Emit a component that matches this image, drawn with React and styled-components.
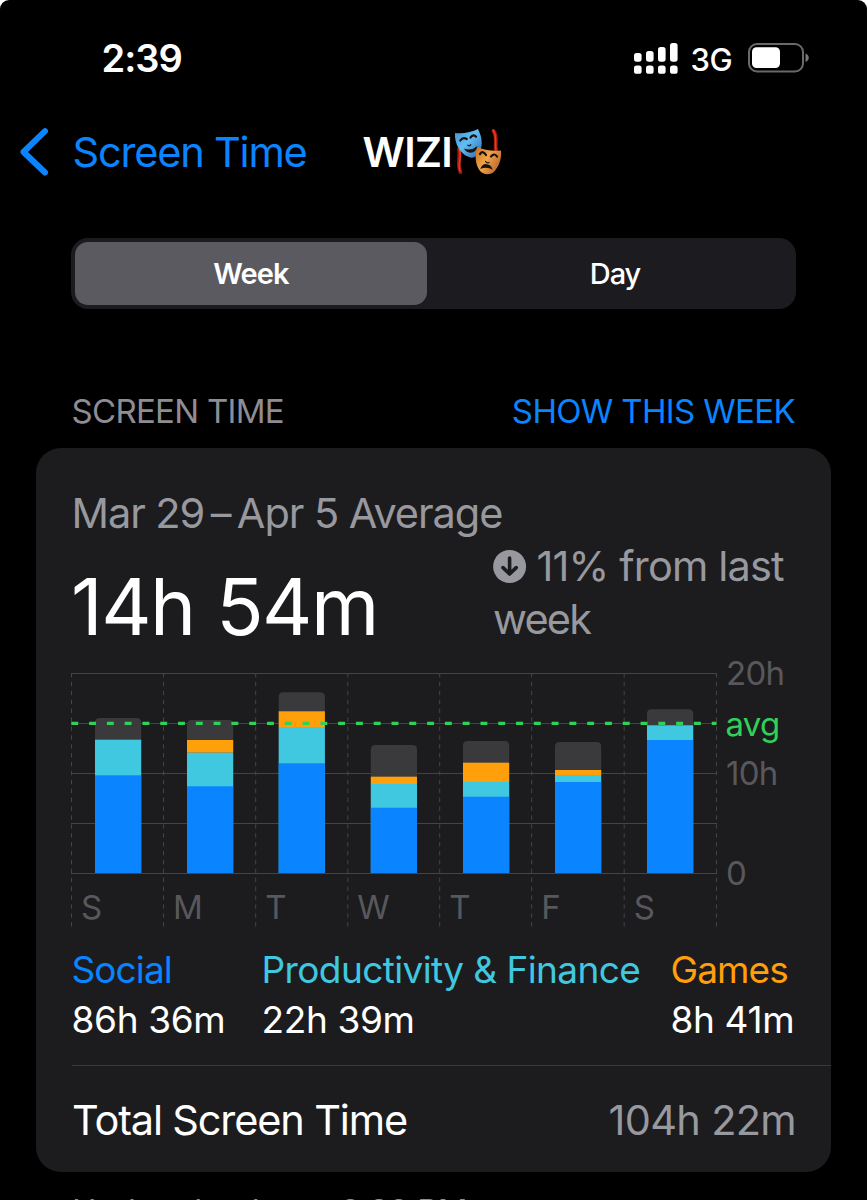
import React from "react";
import styled, { createGlobalStyle } from "styled-components";

const GlobalStyle = createGlobalStyle`
  * { box-sizing: border-box; }
  body { margin: 0; background: #fff; }
`;

const c = {
  blue: "#0a84ff",
  teal: "#40c8e0",
  orange: "#ff9f0a",
  green: "#30d158",
  gray: "#98989f",
  dim: "#58585c",
  rest: "#3a3a3c",
  card: "#1c1c1e",
};

const Screen = styled.main`
  width: 867px;
  height: 1200px;
  overflow: hidden;
  display: flex;
  flex-direction: column;
  background: #000;
  border-radius: 9px 9px 0 0;
  font-family: Inter, "Liberation Sans", sans-serif;
  color: #fff;
  white-space: nowrap;

  & > * {
    flex: none;
  }
`;

const StatusBar = styled.header`
  display: flex;
  align-items: center;
  justify-content: space-between;
  height: 116px;
  padding: 0 58px 0 101.5px;
`;

const Clock = styled.time`
  font-size: 38px;
  font-weight: 600;
  letter-spacing: -1px;
`;

const StatusIcons = styled.div`
  display: flex;
  align-items: center;
`;

const Network = styled.span`
  margin: 2px 16px 0 13px;
  font-size: 31px;
  font-weight: 500;
  letter-spacing: -0.6px;
`;

const NavBar = styled.nav`
  display: flex;
  align-items: center;
  height: 71px;
  padding-left: 19px;
`;

const BackLabel = styled.a`
  margin-left: 22.5px;
  width: 290px;
  font-size: 41.5px;
  line-height: 50px;
  letter-spacing: -1.2px;
  color: ${c.blue};
`;

const Title = styled.h1`
  margin: 0;
  display: flex;
  align-items: center;
  gap: 3px;
  font-size: 41.5px;
  line-height: 50px;
  font-weight: 600;
  letter-spacing: -0.7px;
`;

const Segmented = styled.div`
  display: grid;
  grid-template-columns: 352px 1fr;
  height: 71px;
  margin: 51px 71px 0;
  padding: 4px;
  border-radius: 17px;
  background: #1c1c20;
`;

const Segment = styled.button`
  border: 0;
  border-radius: 13px;
  padding: 0 0 0 ${(p) => (p.$on ? "0" : "11px")};
  font: ${(p) => (p.$on ? 600 : 500)} 29px/62px Inter, sans-serif;
  letter-spacing: ${(p) => (p.$on ? "-0.9px" : "-1.1px")};
  color: #fff;
  background: ${(p) => (p.$on ? "#5b5a60" : "transparent")};
`;

const SectionHeader = styled.div`
  display: flex;
  justify-content: space-between;
  height: 52px;
  margin: 76px 72px 11px 71.5px;
  font-size: 33px;
  line-height: 52px;
  letter-spacing: -0.7px;
  color: #8d8d93;
`;

const HeaderLink = styled.a`
  color: ${c.blue};
  letter-spacing: -0.65px;
`;

const Card = styled.section`
  height: 724px;
  margin: 0 36px;
  padding: 39px 0 0 36px;
  border-radius: 25px;
  background: ${c.card};
`;

const Range = styled.div`
  height: 53px;
  font-size: 41.5px;
  line-height: 53px;
  letter-spacing: -1.07px;
  text-indent: -0.5px;
  color: ${c.gray};
`;

const Summary = styled.div`
  display: flex;
  height: 107px;
`;

const Average = styled.div`
  width: 421px;
  margin-top: 16.5px;
  font-size: 78px;
  line-height: 100px;
  letter-spacing: -1.6px;
  word-spacing: 1.5px;
  text-indent: -1px;
`;

const Change = styled.div`
  font-size: 41.5px;
  line-height: 53px;
  letter-spacing: -0.85px;
  color: ${c.gray};
`;

const ChangeLine = styled.div`
  display: flex;
  align-items: center;
  gap: 9.5px;
`;

const ChangeTail = styled.div`
  letter-spacing: -1.8px;
`;

const Chart = styled.svg`
  display: block;
`;

const ChartLabel = styled.text`
  font-size: 33px;
  fill: ${(p) => p.$fill || c.dim};
  letter-spacing: -0.7px;
`;

const Legend = styled.div`
  display: grid;
  grid-template-columns: 190px 409px auto;
  height: 121px;
  border-bottom: 1px solid #39393c;
`;

const LegendItem = styled.div`
  font-size: 37px;
  line-height: 50px;
  text-indent: -0.5px;
`;

const LegendName = styled.div`
  color: ${(p) => p.$color};
  letter-spacing: ${(p) => p.$track};
`;

const LegendValue = styled.div`
  letter-spacing: -0.35px;
`;

const Total = styled.div`
  display: flex;
  justify-content: space-between;
  padding-right: 35px;
  font-size: 41.5px;
  line-height: 108px;
  letter-spacing: -1.15px;
`;

const TotalValue = styled.span`
  color: ${c.gray};
  letter-spacing: -0.7px;
`;

const Footnote = styled.div`
  margin: 12px 72px 0;
  font-size: 33px;
  line-height: 52px;
  letter-spacing: -0.55px;
  padding-top: 1px;
  color: #8d8d93;
`;

const days = [
  { day: "S", x: 95, rest: 718, orange: 739.7, teal: 739.7, blue: 775.3 },
  { day: "M", x: 187, rest: 720, orange: 740, teal: 752.7, blue: 786.3 },
  { day: "T", x: 278.7, rest: 692.2, orange: 711.3, teal: 727, blue: 763.3 },
  { day: "W", x: 370.8, rest: 745, orange: 776.7, teal: 784, blue: 807.7 },
  { day: "T", x: 463, rest: 741, orange: 762.7, teal: 782, blue: 796.7 },
  { day: "F", x: 555, rest: 742, orange: 770, teal: 775, blue: 782 },
  { day: "S", x: 647, rest: 709.3, orange: 725.3, teal: 725.3, blue: 740 },
];
const base = 873;
const columns = [71.5, 163.5, 255.7, 347.8, 439.7, 531.7, 624.2, 716.5];
const rows = [673.5, 723.5, 773.5, 823.5, 873.5];

function Signal() {
  return (
    <svg width="44" height="31" viewBox="0 0 44 31" fill="#fff">
      {[10, 8, 4, 0].map((y, i) => (
        <g key={i}>
          <rect x={i * 12} y={y} width="7.6" height={18.7 - y} rx="2.6" />
          <rect x={i * 12} y="22.6" width="7.6" height="8.2" rx="2.6" />
        </g>
      ))}
    </svg>
  );
}

function Battery() {
  return (
    <svg width="61" height="30" viewBox="0 0 61 30">
      <rect x="1" y="1" width="54" height="27.5" rx="8" fill="none" stroke="#69696b" strokeWidth="2" />
      <rect x="4" y="4.3" width="28" height="20.7" rx="4.5" fill="#fff" />
      <path d="M57.5 10.5c4.4 1.8 4.4 6.7 0 8.5z" fill="#77777a" />
    </svg>
  );
}

function Masks() {
  return (
    <svg width="50" height="50" viewBox="0 0 50 50" role="img" aria-label="performing arts">
      <defs>
        <linearGradient id="joy" x1="0" x2="1" y2="1">
          <stop offset="0" stopColor="#3b91cd" />
          <stop offset=".45" stopColor="#63bdf3" />
          <stop offset="1" stopColor="#2868b5" />
        </linearGradient>
        <linearGradient id="sad" x1="0" x2="1" y2=".6">
          <stop offset="0" stopColor="#c46f1c" />
          <stop offset=".5" stopColor="#f2a449" />
          <stop offset="1" stopColor="#bd6a2c" />
        </linearGradient>
      </defs>
      <g fill="none" strokeLinecap="round">
        <path d="M4 22C6 30 1.500 36 5.500 45M38.500 4c4.500 6 1 13 2.500 20" stroke="#a3190b" strokeWidth="3.8" />
        <path d="M4.500 23C7 30 2.500 36 5 44M38 3c4.500 6 1.500 13 3 20" stroke="#ef3b1b" strokeWidth="1.5" />
      </g>
      <path d="M0 6C8 7 17 5 23 2c2.500 5 4.500 11 3.500 17-1 6-5 11.500-10 11.700C7 29.500-1 18 0 6z" fill="url(#joy)" />
      <path d="M22 20c7 3 15 4.500 24 3.500.7 7-1.300 15-6.300 20.500-4 4.500-11 4.500-15-.5-4.500-6-5-15-2.700-23.500z" fill="url(#sad)" />
      <g fill="none" stroke="#17120f" strokeLinecap="round" strokeWidth="2.2">
        <path d="M5.300 13.500q2.500-4 6.500-1.500M15.500 10.500q3-4 5.500-.8M25 27q3-4 6 1M36 29.500q3.500-4 6 0" />
        <path d="M12.800 18.200q1.500 1.500 3-.5M30.500 34.500q1.500 2 3.500 1" strokeWidth="1.2" />
      </g>
      <path d="M9 21.500q7 3 13.500-2.500-1.500 6.500-6.500 6.800-4.500 0-7-4.300zM25.300 42q2-5.500 6.500-4.800 4.500.3 5.800 5.500-5.800-3.700-12.300-.7z" fill="#1c130d" />
    </svg>
  );
}

function DownBadge() {
  return (
    <svg width="34" height="34" viewBox="0 0 34 34">
      <circle cx="16.6" cy="16.5" r="16.5" fill={c.gray} />
      <path d="M16.6 8v16M10 17.600l6.600 6.400 6.600-6.400" fill="none" stroke={c.card} strokeWidth="3.6" strokeLinecap="round" strokeLinejoin="round" />
    </svg>
  );
}

function UsageChart() {
  return (
    <Chart width="759" height="298" viewBox="72 647 759 298" overflow="visible">
      {rows.map((y) => (
        <line key={y} x1="71" x2="717" y1={y} y2={y} stroke="#444446" />
      ))}
      {columns.map((x) => (
        <line key={x} x1={x} x2={x} y1="673" y2="927" stroke="#444446" strokeDasharray="4.4 4.5" />
      ))}
      {days.map((d, i) => (
        <g key={i}>
          <path d={`M${d.x} ${d.blue}V${d.rest + 4.5}q0-4.5 4.5-4.5h37.2q4.5 0 4.5 4.5V${d.blue}z`} fill={c.rest} />
          <rect x={d.x} y={d.orange} width="46.2" height={d.teal - d.orange} fill={c.orange} />
          <rect x={d.x} y={d.teal} width="46.2" height={base - d.teal} fill={c.teal} />
          <rect x={d.x} y={d.blue} width="46.2" height={base - d.blue} fill={c.blue} />
          <ChartLabel x={columns[i] + 9.5} y="918.5">{d.day}</ChartLabel>
        </g>
      ))}
      <line x1="71.3" x2="716.5" y1="723.4" y2="723.4" stroke={c.green} strokeWidth="3.3" strokeDasharray="6.9 10.89" />
      <ChartLabel x="726" y="685">20h</ChartLabel>
      <ChartLabel x="725.5" y="735.5" $fill={c.green}>avg</ChartLabel>
      <ChartLabel x="726" y="785">10h</ChartLabel>
      <ChartLabel x="726" y="885">0</ChartLabel>
    </Chart>
  );
}

export default function App() {
  return (
    <Screen>
      <GlobalStyle />
      <StatusBar>
        <Clock>2:39</Clock>
        <StatusIcons>
          <Signal />
          <Network>3G</Network>
          <Battery />
        </StatusIcons>
      </StatusBar>
      <NavBar>
        <svg width="31" height="48" viewBox="0 0 31 48" fill="none">
          <path d="M26 3.200 4.500 24 26 44.500" stroke={c.blue} strokeWidth="6" strokeLinecap="round" strokeLinejoin="round" />
        </svg>
        <BackLabel>Screen Time</BackLabel>
        <Title>WIZI<Masks /></Title>
      </NavBar>
      <Segmented>
        <Segment $on>Week</Segment>
        <Segment>Day</Segment>
      </Segmented>
      <SectionHeader>
        <span>SCREEN TIME</span>
        <HeaderLink>SHOW THIS WEEK</HeaderLink>
      </SectionHeader>
      <Card>
        <Range>Mar 29{"\u2009"}–{"\u2009"}Apr 5 Average</Range>
        <Summary>
          <Average>14h 54m</Average>
          <Change>
            <ChangeLine><DownBadge />11% from last</ChangeLine>
            <ChangeTail>week</ChangeTail>
          </Change>
        </Summary>
        <UsageChart />
        <Legend>
          <LegendItem>
            <LegendName $color={c.blue} $track="-0.9px">Social</LegendName>
            <LegendValue>86h 36m</LegendValue>
          </LegendItem>
          <LegendItem>
            <LegendName $color={c.teal} $track="-0.6px">Productivity &amp; Finance</LegendName>
            <LegendValue>22h 39m</LegendValue>
          </LegendItem>
          <LegendItem>
            <LegendName $color={c.orange} $track="-0.9px">Games</LegendName>
            <LegendValue>8h 41m</LegendValue>
          </LegendItem>
        </Legend>
        <Total>
          <span>Total Screen Time</span>
          <TotalValue>104h 22m</TotalValue>
        </Total>
      </Card>
      <Footnote>Updated today at 2:39 PM</Footnote>
    </Screen>
  );
}
